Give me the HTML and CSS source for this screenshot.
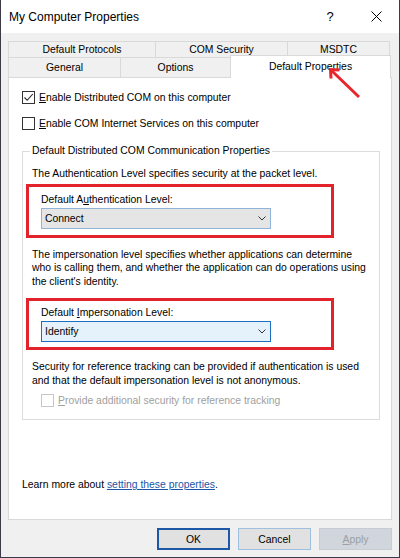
FILE: index.html
```html
<!DOCTYPE html>
<html>
<head>
<meta charset="utf-8">
<link rel="stylesheet" href="styles.css">
</head>
<body>
<div class="window">
  <div class="titlebar">
    <span class="title">My Computer Properties</span>
    <span class="help">?</span>
    <span class="close"><svg width="11" height="11" viewBox="0 0 11 11"><path d="M0.5 0.5 L10.5 10.5 M10.5 0.5 L0.5 10.5" stroke="#000" stroke-width="1" fill="none"/></svg></span>
  </div>
  <div class="content">
    <div class="tabs">
      <div class="tabrow back">
        <div class="tab t-proto">Default Protocols</div>
        <div class="tab t-sec">COM Security</div>
        <div class="tab t-msdtc">MSDTC</div>
      </div>
      <div class="tabrow front">
        <div class="tab t-gen">General</div>
        <div class="tab t-opt">Options</div>
        <div class="tab t-def selected">Default Properties</div>
      </div>
    </div>
    <div class="panel">
      <div class="check first">
        <span class="box"><svg width="11" height="11" viewBox="0 0 11 11"><path d="M1.5 5.5 L4.2 8.3 L9.8 2" stroke="#222" stroke-width="1.1" fill="none"/></svg></span>
        <span class="label"><u>E</u>nable Distributed COM on this computer</span>
      </div>
      <div class="check second">
        <span class="box"></span>
        <span class="label"><u>E</u>nable COM Internet Services on this computer</span>
      </div>
      <fieldset class="group">
        <legend>Default Distributed COM Communication Properties</legend>
        <p class="text auth-text">The Authentication Level specifies security at the packet level.</p>
        <div class="redbox rb1">
          <div class="field-label">Default A<u>u</u>thentication Level:</div>
          <div class="combo gray"><span>Connect</span><svg width="8" height="5" viewBox="0 0 8 5"><path d="M0.5 0.5 L4 4 L7.5 0.5" stroke="#333" stroke-width="1" fill="none"/></svg></div>
        </div>
        <p class="text imp-text">The impersonation level specifies whether applications can determine who is calling them, and whether the application can do operations using the client's identity.</p>
        <div class="redbox rb2">
          <div class="field-label">Default <u>I</u>mpersonation Level:</div>
          <div class="combo blue"><span>Identify</span><svg width="8" height="5" viewBox="0 0 8 5"><path d="M0.5 0.5 L4 4 L7.5 0.5" stroke="#333" stroke-width="1" fill="none"/></svg></div>
        </div>
        <p class="text sec-text">Security for reference tracking can be provided if authentication is used and that the default impersonation level is not anonymous.</p>
        <div class="check disabled">
          <span class="box"></span>
          <span class="label"><u>P</u>rovide additional security for reference tracking</span>
        </div>
      </fieldset>
      <p class="learn">Learn more about <a href="#">setting these properties</a>.</p>
    </div>
    <div class="buttons">
      <button class="btn default">OK</button>
      <button class="btn cancel">Cancel</button>
      <button class="btn disabled"><u>A</u>pply</button>
    </div>
  </div>
  <svg class="arrow" width="40" height="40" viewBox="0 0 40 40">
    <path d="M31 30 L4 4" stroke="#e8262c" stroke-width="3" fill="none"/>
    <path d="M11.5 3 L2.5 2.5 L3 11.5" stroke="#e8262c" stroke-width="3" fill="none"/>
  </svg>
</div>
</body>
</html>
```
FILE: styles.css
```css
html, body {
  margin: 0;
  padding: 0;
  background: #fff;
}
body {
  font-family: "Liberation Sans", Arial, sans-serif;
  font-size: 10.4px;
  color: #000;
}
.window {
  position: relative;
  width: 400px;
  height: 558px;
  box-sizing: border-box;
  border: 1px solid #3f3947;
  border-top: none;
  background: #f0f0f0;
  display: flex;
  flex-direction: column;
}
.titlebar {
  height: 33px;
  background: #fff;
  display: flex;
  align-items: center;
  padding-left: 8px;
  padding-right: 8px;
  flex: none;
}
.title {
  flex: 1;
  font-size: 12px;
}
.help {
  width: 30px;
  text-align: center;
  font-size: 13px;
  margin-right: 16px;
}
.close {
  width: 30px;
  display: flex;
  justify-content: center;
  align-items: center;
}
.content {
  padding: 8px 7px 0 7px;
}
.tabrow {
  display: flex;
}
.tab {
  box-sizing: border-box;
  border-top: 1px solid #d9d9d9;
  border-left: 1px solid #d9d9d9;
  background: #f0f0f0;
  display: flex;
  align-items: center;
  justify-content: center;
}
.back .tab { height: 16px; }
.front .tab { height: 20px; }
.t-proto { width: 147px; }
.t-sec { width: 132px; }
.t-msdtc { width: 103px; border-right: 1px solid #d9d9d9; }
.t-gen { width: 112px; }
.t-opt { width: 110px; }
.tab.selected {
  width: 161px;
  height: 23px;
  margin-top: -2px;
  margin-bottom: -1px;
  background: #fff;
  border-right: 1px solid #d9d9d9;
  position: relative;
  z-index: 1;
  padding-bottom: 2px;
}
.panel {
  box-sizing: border-box;
  width: 384px;
  height: 443px;
  border: 1px solid #d9d9d9;
  background: #fff;
  padding: 0 0 0 13px;
  display: flex;
  flex-direction: column;
}
.check {
  display: flex;
  align-items: center;
  height: 13px;
}
.check.first { margin-top: 13px; }
.check.second { margin-top: 13px; }
.box {
  box-sizing: border-box;
  width: 13px;
  height: 13px;
  border: 1px solid #333;
  background: #fff;
  display: flex;
  align-items: center;
  justify-content: center;
  flex: none;
}
.label {
  margin-left: 4px;
  line-height: 14px;
}
.check.disabled {
  margin-left: 9px;
  margin-top: 7px;
}
.check.disabled .box { border-color: #c6c6c6; }
.check.disabled .label { color: #a0a0a0; }
.group {
  box-sizing: border-box;
  width: 358px;
  margin: 14px 0 0 0;
  padding: 9px 9px 12px 9px;
  border: 1px solid #dcdcdc;
  min-width: 0;
}
.group legend {
  padding: 0 2px;
  margin-left: -2px;
  line-height: 14px;
}
.text {
  margin: 0;
  line-height: 13.5px;
}
.auth-text { margin-top: 0; }
.redbox {
  box-sizing: border-box;
  width: 308px;
  margin-left: -6px;
  border: 3px solid #e2232b;
  padding: 6px 0 6px 12px;
}
.rb1 { margin-top: 3px; }
.rb2 { margin-top: 10px; padding-top: 5px; padding-bottom: 5px; }
.imp-text { margin-top: 10px; }
.sec-text { margin-top: 10px; }
.field-label {
  line-height: 14px;
}
.combo {
  box-sizing: border-box;
  width: 230px;
  height: 21px;
  margin-top: 1px;
  display: flex;
  align-items: center;
  justify-content: space-between;
  padding: 0 4px 0 3px;
}
.combo.gray {
  background: #e5e5e5;
  border: 1px solid #8fb4d8;
}
.combo.blue {
  background: #e5f1fb;
  border: 1px solid #1f6fc0;
}
.learn {
  margin: 58px 0 0 0;
  line-height: 14px;
}
.learn a {
  color: #1a55a8;
  text-decoration: underline;
}
.buttons {
  display: flex;
  justify-content: flex-end;
  gap: 8px;
  width: 384px;
  margin-top: 8px;
}
.btn {
  box-sizing: border-box;
  width: 73px;
  height: 22px;
  font-family: "Liberation Sans", Arial, sans-serif;
  font-size: 10.4px;
  color: #000;
  background: #e1e1e1;
  border: 1px solid #adadad;
  padding: 0;
  margin: 0;
}
.btn.default {
  border: 2px solid #1d58a6;
}
.btn.cancel {
  border-color: #9fbfdf;
}
.btn.disabled {
  background: #d0d6dc;
  border-color: #c4ccd4;
  color: #9aa0a6;
}
.arrow {
  position: absolute;
  left: 327px;
  top: 67px;
  z-index: 2;
}
```
